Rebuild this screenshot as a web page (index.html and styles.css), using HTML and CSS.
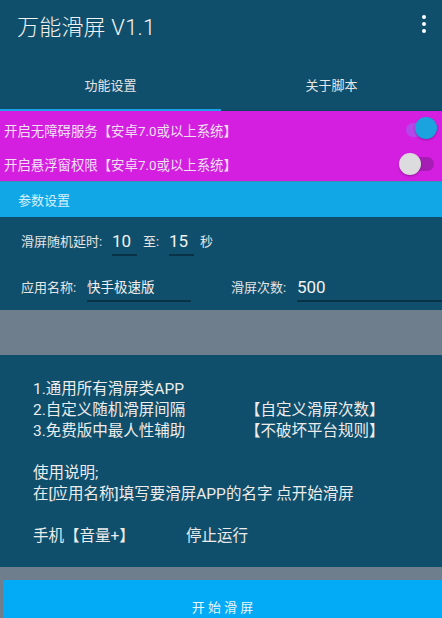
FILE: index.html
```html
<!DOCTYPE html>
<html lang="zh-CN">
<head>
<meta charset="utf-8">
<link rel="stylesheet" href="styles.css">
</head>
<body>
<div class="app">
  <header class="appbar">
    <div class="titlebar">
      <span class="title">万能滑屏 V1.1</span>
      <span class="kebab"><i></i><i></i><i></i></span>
    </div>
    <nav class="tabs">
      <div class="tab active">功能设置</div>
      <div class="tab">关于脚本</div>
    </nav>
  </header>

  <section class="perms">
    <div class="perm-row">
      <span>开启无障碍服务【安卓7.0或以上系统】</span>
      <span class="switch on"><span class="track"></span><span class="thumb"></span></span>
    </div>
    <div class="perm-row">
      <span>开启悬浮窗权限【安卓7.0或以上系统】</span>
      <span class="switch off"><span class="track"></span><span class="thumb"></span></span>
    </div>
  </section>

  <div class="section-head">参数设置</div>

  <section class="params">
    <div class="param-row row1">
      <span class="lbl lbl-delay">滑屏随机延时:</span>
      <span class="input in-small">10</span>
      <span class="lbl lbl-to">至:</span>
      <span class="input in-small">15</span>
      <span class="lbl lbl-sec">秒</span>
    </div>
    <div class="param-row row2">
      <span class="lbl lbl-name">应用名称:</span>
      <span class="input in-name">快手极速版</span>
      <span class="lbl lbl-count">滑屏次数:</span>
      <span class="input in-count">500</span>
    </div>
  </section>

  <div class="gray-band"></div>

  <section class="info">
    <div class="line">1.通用所有滑屏类APP</div>
    <div class="line"><span class="col1">2.自定义随机滑屏间隔</span><span>【自定义滑屏次数】</span></div>
    <div class="line"><span class="col1">3.免费版中最人性辅助</span><span>【不破坏平台规则】</span></div>
    <div class="line blank"></div>
    <div class="line">使用说明;</div>
    <div class="line">在[应用名称]填写要滑屏APP的名字 点开始滑屏</div>
    <div class="line blank"></div>
    <div class="line"><span class="col-key">手机【音量+】</span><span>停止运行</span></div>
  </section>

  <div class="footer">
    <button class="start">开 始 滑 屏</button>
  </div>
</div>
</body>
</html>
```

FILE: styles.css
```css
* { box-sizing: border-box; }
html, body {
  margin: 0;
  padding: 0;
  width: 442px;
  height: 618px;
  overflow: hidden;
  background: #104f6b;
  font-family: Roboto, "Noto Sans CJK SC", sans-serif;
  color: #ececec;
}
.app {
  display: flex;
  flex-direction: column;
  width: 442px;
}
.appbar {
  background: #104f6b;
}
.titlebar {
  height: 50px;
  display: flex;
  align-items: center;
  justify-content: space-between;
  padding: 0 17px 0 17px;
}
.title {
  font-size: 22px;
  font-weight: 300;
  color: #f2f2f2;
  letter-spacing: 0.2px;
}
.kebab {
  display: flex;
  flex-direction: column;
  gap: 3px;
  margin-right: -1px;
  margin-top: -2px;
}
.kebab i {
  display: block;
  width: 4px;
  height: 4px;
  border-radius: 50%;
  background: #ffffff;
}
.tabs {
  display: flex;
  height: 61px;
  border-bottom: 1px solid #0d4560;
}
.tab {
  flex: 1;
  text-align: center;
  font-size: 13px;
  line-height: 20px;
  padding-top: 26px;
  color: #e6e6e6;
}
.tab.active {
  border-bottom: 2px solid #1aa3e6;
  margin-bottom: -1px;
}
.perms {
  background: #d41ee0;
  height: 70px;
  display: flex;
  flex-direction: column;
}
.perm-row {
  height: 35px;
  display: flex;
  align-items: center;
  justify-content: space-between;
  padding: 0 6px 0 4px;
  font-size: 13.4px;
  color: #f0e0f2;
}
.perm-row:first-child { padding-top: 3px; }
.switch {
  position: relative;
  width: 36px;
  height: 22px;
}
.switch .track {
  position: absolute;
  left: 6px;
  top: 4px;
  width: 28px;
  height: 14px;
  border-radius: 7px;
}
.switch .thumb {
  position: absolute;
  top: 0;
  width: 22px;
  height: 22px;
  border-radius: 50%;
  box-shadow: 0 1px 2px rgba(0,0,0,0.3);
}
.switch.on .track { background: #b447ea; }
.switch.on .thumb { left: 15px; background: #1aa3df; top: -2px; }
.switch.off .track { background: #a51db4; }
.switch.off .thumb { left: -1px; background: #dcdcde; }
.section-head {
  background: #11a7e7;
  height: 36px;
  display: flex;
  align-items: center;
  padding-left: 18px;
  font-size: 13px;
  color: #d8f0fb;
  border-top: 1px solid #3a8fb8;
}
.params {
  height: 93px;
  padding-top: 9px;
  display: flex;
  flex-direction: column;
}
.param-row {
  display: flex;
  align-items: flex-end;
  padding-left: 21px;
}
.row1 { height: 30px; }
.row2 { height: 33px; margin-top: 13px; }
.lbl {
  font-size: 13px;
  line-height: 24px;
  padding-bottom: 2px;
  color: #e4e4e4;
}
.lbl-delay { width: 91px; }
.lbl-to { width: 32px; padding-left: 6px; }
.lbl-sec { padding-left: 6px; }
.lbl-name { width: 66px; }
.lbl-count { width: 66px; margin-left: 40px; }
.input {
  border-bottom: 2px solid #0a3247;
  line-height: 26px;
  color: #f2f2f2;
  white-space: nowrap;
}
.in-small { width: 25px; font-size: 17px; }
.in-name { width: 104px; font-size: 13.5px; }
.in-count { flex: 1; font-size: 17px; }
.gray-band {
  height: 45px;
  background: #6f7e8c;
}
.info {
  height: 212px;
  padding: 24px 0 0 33px;
  font-size: 15.5px;
  color: #ececec;
}
.line {
  line-height: 21px;
  height: 21px;
  white-space: nowrap;
}
.col1 {
  display: inline-block;
  width: 212px;
}
.col-key {
  display: inline-block;
  width: 153px;
}
.footer {
  background: #6f7e8c;
  padding: 13px 0 0 3px;
  height: 51px;
}
.start {
  display: block;
  width: 439px;
  height: 48px;
  border: 0;
  border-radius: 2px 0 0 0;
  background: #03aaf5;
  color: #e8f6fd;
  font-family: Roboto, "Noto Sans CJK SC", sans-serif;
  font-size: 13px;
  padding: 4px 0 0 0;
  text-align: center;
}
```
